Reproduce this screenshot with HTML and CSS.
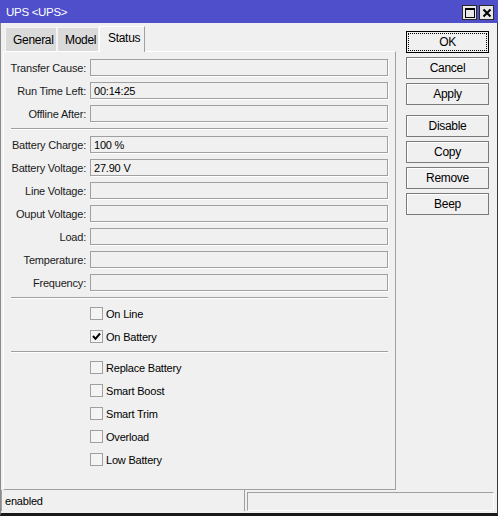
FILE: index.html
```html
<!DOCTYPE html>
<html>
<head>
<meta charset="utf-8">
<link rel="stylesheet" href="styles.css">
</head>
<body>
<div class="window">
  <div class="titlebar">
    <span class="title">UPS &lt;UPS&gt;</span>
    <div class="tbtns">
      <span class="tbtn"><svg width="12" height="12" viewBox="0 0 12 12"><rect x="1.5" y="1.5" width="9" height="9" fill="none" stroke="#000" stroke-width="1"/><rect x="1" y="1" width="10" height="2" fill="#000"/></svg></span>
      <span class="tbtn"><svg width="12" height="12" viewBox="0 0 12 12"><path d="M2.5 2.5 L9.5 9.5 M9.5 2.5 L2.5 9.5" stroke="#000" stroke-width="2" fill="none"/></svg></span>
    </div>
  </div>
  <div class="main">
    <div class="left">
      <div class="tabs">
        <div class="tab">General</div>
        <div class="tab">Model</div>
        <div class="tab active">Status</div>
      </div>
      <div class="panel">
        <div class="row"><label>Transfer Cause:</label><div class="field"></div></div>
        <div class="row"><label>Run Time Left:</label><div class="field">00:14:25</div></div>
        <div class="row"><label>Offline After:</label><div class="field"></div></div>
        <div class="sep"></div>
        <div class="row"><label>Battery Charge:</label><div class="field">100 %</div></div>
        <div class="row"><label>Battery Voltage:</label><div class="field">27.90 V</div></div>
        <div class="row"><label>Line Voltage:</label><div class="field"></div></div>
        <div class="row"><label>Ouput Voltage:</label><div class="field"></div></div>
        <div class="row"><label>Load:</label><div class="field"></div></div>
        <div class="row"><label>Temperature:</label><div class="field"></div></div>
        <div class="row"><label>Frequency:</label><div class="field"></div></div>
        <div class="sep"></div>
        <div class="row"><span></span><div class="check"><span class="box"></span>On Line</div></div>
        <div class="row"><span></span><div class="check"><span class="box"><svg width="11" height="11" viewBox="0 0 11 11"><path d="M2 5 L4.5 7.8 L9 2.5" stroke="#000" stroke-width="2" fill="none"/></svg></span>On Battery</div></div>
        <div class="sep"></div>
        <div class="row"><span></span><div class="check"><span class="box"></span>Replace Battery</div></div>
        <div class="row"><span></span><div class="check"><span class="box"></span>Smart Boost</div></div>
        <div class="row"><span></span><div class="check"><span class="box"></span>Smart Trim</div></div>
        <div class="row"><span></span><div class="check"><span class="box"></span>Overload</div></div>
        <div class="row"><span></span><div class="check"><span class="box"></span>Low Battery</div></div>
      </div>
    </div>
    <div class="buttons">
      <div class="btn default"><span>OK</span></div>
      <div class="btn">Cancel</div>
      <div class="btn">Apply</div>
      <div class="btn gap">Disable</div>
      <div class="btn">Copy</div>
      <div class="btn">Remove</div>
      <div class="btn">Beep</div>
    </div>
  </div>
  <div class="statusbar">
    <div class="sb1">enabled</div>
    <div class="sb2"></div>
  </div>
</div>
</body>
</html>
```

FILE: styles.css
```css
* { box-sizing: border-box; }
html, body { margin: 0; padding: 0; }
body {
  font-family: "Liberation Sans", Arial, sans-serif;
  font-size: 11px;
  letter-spacing: -0.2px;
  color: #000;
  background: #fff;
}
.window {
  width: 498px;
  height: 516px;
  background: #f0f0f0;
  border-left: 1px solid #8a8a8a;
  border-right: 1px solid #3a3a3a;
  border-bottom: 3px solid #1a1a1a;
  display: flex;
  flex-direction: column;
}
.titlebar {
  height: 23px;
  background: #4f4fcb;
  margin-left: -1px;
  margin-right: -1px;
  display: flex;
  align-items: center;
  justify-content: space-between;
  padding: 0 4px 0 6px;
  flex: none;
}
.title {
  color: #fff;
  font-size: 11.5px;
  letter-spacing: -0.3px;
  padding-top: 1px;
}
.tbtns { display: flex; gap: 2px; padding-top: 2px; }
.tbtn {
  width: 15px;
  height: 15px;
  background: #e8e8e8;
  border: 1px solid #2a2a2a;
  display: flex;
  align-items: center;
  justify-content: center;
}
.tbtn svg { display: block; }
.main {
  display: flex;
  height: 467px;
  flex: none;
  padding-left: 2px;
}
.left {
  width: 393px;
  display: flex;
  flex-direction: column;
}
.tabs {
  height: 28px;
  display: flex;
  align-items: flex-end;
  padding-left: 2px;
  position: relative;
  z-index: 1;
}
.tab {
  height: 24px;
  background: #dadada;
  border: 1px solid #f4f4f4;
  border-bottom: none;
  padding: 5px 7px 0 7px;
  font-size: 12px;
  letter-spacing: -0.3px;
}
.tab:nth-child(1) { width: 52px; }
.tab:nth-child(2) { width: 42px; }
.tab.active {
  width: 46px;
  height: 26px;
  margin-bottom: -1px;
  background: #f0f0f0;
  border-left: 1px solid #fff;
  border-top: 1px solid #fff;
  border-right: 1px solid #a0a0a0;
  padding-top: 4px;
  padding-left: 8px;
}
.panel {
  height: 439px;
  border-top: 1px solid #fff;
  border-left: 1px solid #fff;
  border-right: 1px solid #a0a0a0;
  border-bottom: 1px solid #a0a0a0;
  padding: 7px 7px 0 0;
  display: flex;
  flex-direction: column;
  gap: 6px;
}
.row {
  display: grid;
  grid-template-columns: 82px 1fr;
  column-gap: 4px;
  height: 17px;
  align-items: center;
}
.row label {
  text-align: right;
  white-space: nowrap;
  color: #1a1a1a;
}
.field {
  height: 17px;
  border: 1px solid #a0a0a0;
  box-shadow: 1px 1px 0 #fff;
  padding: 1px 0 0 3px;
  line-height: 14px;
}
.sep {
  height: 2px;
  margin-left: 7px;
  border-top: 1px solid #a0a0a0;
  border-bottom: 1px solid #fff;
}
.check {
  display: flex;
  align-items: center;
  gap: 3px;
}
.box {
  width: 13px;
  height: 13px;
  border: 1px solid #a0a0a0;
  background: #f4f4f4;
  display: flex;
  align-items: center;
  justify-content: center;
}
.box svg { display: block; }
.buttons {
  margin-left: 10px;
  padding-top: 8px;
  display: flex;
  flex-direction: column;
  gap: 4px;
}
.btn {
  width: 83px;
  height: 22px;
  border: 1px solid #7a7a7a;
  box-shadow: inset 1px 1px 0 #fff;
  background: #f0f0f0;
  display: flex;
  align-items: center;
  justify-content: center;
  font-size: 12px;
  letter-spacing: -0.3px;
}
.btn.default {
  border-color: #000;
  padding: 1px;
  box-shadow: none;
}
.btn.default span {
  width: 100%;
  height: 100%;
  border: 1px dotted #000;
  display: flex;
  align-items: center;
  justify-content: center;
}
.btn.gap { margin-top: 6px; }
.statusbar {
  flex: 1;
  display: flex;
  gap: 2px;
  padding: 0 3px 2px 0;
}
.sb1 {
  width: 244px;
  border-left: 1px solid #a0a0a0;
  border-right: 1px solid #a0a0a0;
  padding: 5px 0 0 3px;
}
.sb2 {
  flex: 1;
  margin-top: 2px;
  border-top: 1px solid #a0a0a0;
  border-left: 1px solid #a0a0a0;
  border-right: 1px solid #fff;
  border-bottom: 1px solid #fff;
}
```
